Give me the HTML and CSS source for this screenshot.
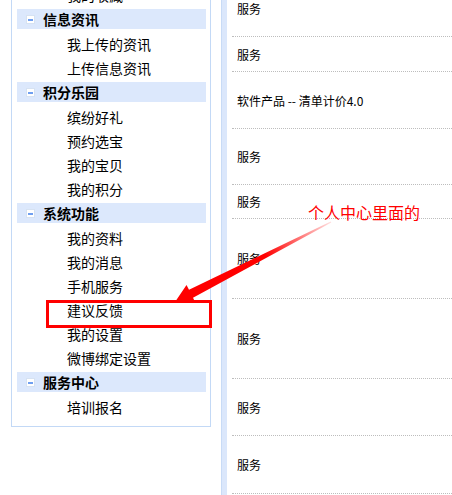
FILE: index.html
```html
<!DOCTYPE html>
<html lang="zh-CN">
<head>
  <meta charset="UTF-8" />
  <title>个人中心</title>
  <link rel="stylesheet" href="styles.css">
</head>
<body>

<div class="page">
  <aside class="side">
    <div class="menu">
      <a class="menu-item">我的收藏</a>

      <div class="menu-title"><span class="fold"></span>信息资讯</div>
      <a class="menu-item">我上传的资讯</a>
      <a class="menu-item">上传信息资讯</a>

      <div class="menu-title"><span class="fold"></span>积分乐园</div>
      <a class="menu-item">缤纷好礼</a>
      <a class="menu-item">预约选宝</a>
      <a class="menu-item">我的宝贝</a>
      <a class="menu-item">我的积分</a>

      <div class="menu-title"><span class="fold"></span>系统功能</div>
      <a class="menu-item">我的资料</a>
      <a class="menu-item">我的消息</a>
      <a class="menu-item">手机服务</a>
      <a class="menu-item">建议反馈</a>
      <a class="menu-item">我的设置</a>
      <a class="menu-item">微博绑定设置</a>

      <div class="menu-title"><span class="fold"></span>服务中心</div>
      <a class="menu-item">培训报名</a>
    </div>
  </aside>

  <div class="split"></div>

  <main class="list">
    <div class="row row-57">服务</div>
    <div class="row row-35">服务</div>
    <div class="row row-57">软件产品 -- 清单计价4.0</div>
    <div class="row row-56">服务</div>
    <div class="row row-34">服务</div>
    <div class="row row-80">服务</div>
    <div class="row row-80">服务</div>
    <div class="row row-57">服务</div>
    <div class="row row-58">服务</div>
  </main>
</div>

<!-- annotation drawn over the screenshot -->
<div class="note">个人中心里面的</div>
<svg class="arrow" width="452" height="495" viewBox="0 0 452 495">
  <defs>
    <linearGradient id="fade" gradientUnits="userSpaceOnUse" x1="331" y1="222" x2="265" y2="256">
      <stop offset="0" stop-color="#ffe0e0"/>
      <stop offset="1" stop-color="#ff0000"/>
    </linearGradient>
  </defs>
  <polygon fill="url(#fade)"
    points="175,302 195.5,302.7 193,297.8 331.3,222.6 330.7,221.4 189,289.8 186.5,284.9"/>
</svg>
<div class="mark"></div>

</body>
</html>
```

FILE: styles.css
```css
body {
  margin: 0;
  font-family: "Noto Sans CJK SC", "Liberation Sans", sans-serif;
  color: #000;
  background-color: #fff;
  overflow: hidden;
  position: relative;
  height: 495px;
}

.page {
  display: flex;
  align-items: flex-start;
  margin-top: -20px;
}

/* left menu */
.side {
  width: 221px;
  padding-left: 11px;
  box-sizing: border-box;
  flex-shrink: 0;
}

.menu {
  width: 200px;
  box-sizing: border-box;
  border: 1px solid #c3d9f6;
  padding: 2px 4px 7px 5px;
}

.menu-title {
  display: flex;
  align-items: center;
  gap: 8px;
  height: 20px;
  margin: 2px 0 3px;
  padding-left: 9px;
  background-color: #dce8fc;
  font-size: 14px;
  font-weight: bold;
  line-height: 20px;
}

.fold {
  position: relative;
  width: 9px;
  height: 9px;
  box-sizing: border-box;
  border: 1px solid #d6e2f2;
  background-color: #fff;
  margin-top: 1px;
}

.fold::after {
  content: "";
  position: absolute;
  left: 1px;
  top: 3px;
  width: 5px;
  height: 2px;
  background-color: #6f9ff0;
}

.menu-item {
  display: block;
  height: 24px;
  line-height: 24px;
  padding-left: 50px;
  font-size: 14px;
  color: #000;
  text-decoration: none;
}

/* divider bar */
.split {
  width: 6px;
  align-self: stretch;
  min-height: 540px;
  box-sizing: border-box;
  border-left: 1px solid #c8dbf6;
  background-color: #dbe7fb;
  flex-shrink: 0;
}

/* right list */
.list {
  flex: 1;
  padding-left: 5px;
}

.row {
  display: flex;
  align-items: center;
  box-sizing: border-box;
  padding-left: 5px;
  border-bottom: 1px dotted #bdbdbd;
  font-size: 12px;
}

.row-34 { height: 34px; }
.row-35 { height: 35px; }
.row-56 { height: 56px; }
.row-57 { height: 57px; }
.row-58 { height: 58px; }
.row-80 { height: 80px; }

/* annotation */
.note {
  position: absolute;
  left: 308px;
  top: 203px;
  font-size: 16px;
  line-height: 18px;
  color: #ff0000;
}

.arrow {
  position: absolute;
  left: 0;
  top: 0;
}

.mark {
  position: absolute;
  left: 46px;
  top: 300px;
  width: 166px;
  height: 28px;
  box-sizing: border-box;
  border: 3px solid #ff0000;
}
```
